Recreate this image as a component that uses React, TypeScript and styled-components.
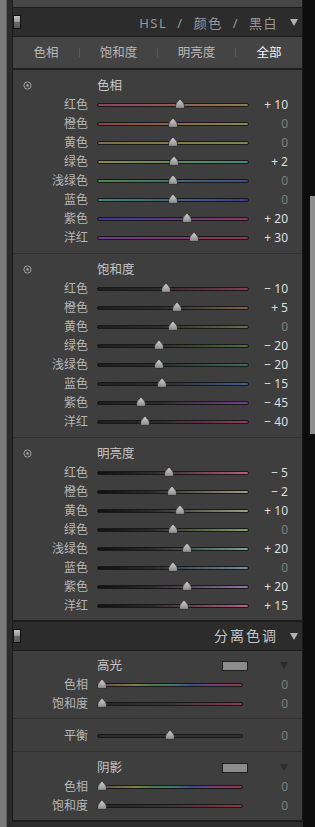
import * as React from 'react';
import styled, { createGlobalStyle, css } from 'styled-components';

const GlobalStyle = createGlobalStyle`
  html, body {
    margin: 0;
    padding: 0;
    background: #0c0c0c;
  }
  body {
    font-family: "Noto Sans", "Noto Sans CJK SC", sans-serif;
  }
`;

const sides = css`
  border-left: 1px solid #1b1b1b;
  border-right: 1px solid #1b1b1b;
`;

const Screen = styled.div`
  display: flex;
  width: 315px;
  height: 827px;
  overflow: hidden;
  background: #0c0c0c;
`;

const Edge = styled.div`
  width: 7px;
  background: #7a7a7a;
  box-shadow: inset -1px 0 0 #5e5e5e;
`;

const Column = styled.div`
  width: 296px;
  padding-left: 5px;
  box-sizing: border-box;
  background: #2b2b2b;
  display: flex;
  flex-direction: column;
`;

const ScrollTrack = styled.div`
  width: 12px;
  padding-left: 7px;
  box-sizing: border-box;
  background: #0c0c0c;
`;

const ScrollThumb = styled.div`
  margin-top: 196px;
  height: 238px;
  background: #8e8e8e;
`;

const TopStub = styled.div`
  ${sides};
  height: 7px;
  background: #464646;
  border-bottom: 1px solid #1b1b1b;
`;

const Header = styled.div`
  ${sides};
  height: 28px;
  background: #2c2c2c;
  border-bottom: 1px solid #1b1b1b;
  display: flex;
  align-items: center;
  padding-right: 4px;
`;

const Switch = styled.div`
  width: 8px;
  height: 14px;
  box-sizing: border-box;
  border: 1px solid #111;
  background: linear-gradient(#c4c4c4, #9c9c9c 45%, #6a6a6a 52%, #585858);
`;

const Spacer = styled.div`
  flex: 1;
`;

const FadedTitle = styled.div`
  align-self: flex-end;
  margin-bottom: 5px;
  display: flex;
  align-items: flex-end;
  gap: 10px;
  font-size: 13px;
  line-height: 16px;
  color: #9a9a9a;
  letter-spacing: 1.5px;
  white-space: nowrap;
`;

const HeaderTitle = styled.div`
  font-size: 14px;
  line-height: 18px;
  letter-spacing: 2px;
  color: #c6c6c6;
`;

const Caret = styled.div<{ $color?: string }>`
  width: 0;
  height: 0;
  margin-left: 12px;
  border-left: 4.5px solid transparent;
  border-right: 4.5px solid transparent;
  border-top: 7px solid ${p => p.$color || '#b2b2b2'};
`;

const TabBar = styled.div`
  ${sides};
  height: 31px;
  background: #444;
  border-bottom: 2px solid #1e1e1e;
  display: grid;
  grid-template-columns: 66px 1px 77px 1px 77px 1px 66px;
  align-items: center;
`;

const Tab = styled.div<{ $active?: boolean }>`
  text-align: center;
  font-size: 12.5px;
  line-height: 18px;
  color: ${p => (p.$active ? '#f2f2f2' : '#b8b8b8')};
`;

const TabDivider = styled.div`
  height: 9px;
  background: #5a5a5a;
`;

const Body = styled.div`
  ${sides};
  background: #3e3e3e;
  border-bottom: 2px solid #1c1c1c;
`;

const Section = styled.div<{ $top: number; $bottom: number; $last?: boolean }>`
  padding: ${p => p.$top}px 0 ${p => p.$bottom}px;
  border-bottom: ${p => (p.$last ? 'none' : '1px solid #323232')};
`;

const TitleRow = styled.div`
  display: flex;
  align-items: center;
  height: 19px;
  padding-right: 14px;
`;

const IconSlot = styled.div`
  width: 75px;
  padding-left: 10px;
  box-sizing: border-box;
  display: flex;
  align-items: center;
`;

const TitleText = styled.div`
  flex: 1;
  margin-left: 9px;
  font-size: 12.5px;
  line-height: 19px;
  color: #c6c6c6;
`;

const Swatch = styled.div`
  width: 26px;
  height: 10px;
  box-sizing: border-box;
  border: 1px solid #1e1e1e;
  background: #8c8c8c;
  margin-right: 20px;
`;

const Row = styled.div`
  display: flex;
  align-items: center;
  height: 19px;
  padding-right: 14px;
`;

const Label = styled.div`
  width: 75px;
  text-align: right;
  font-size: 12px;
  line-height: 19px;
  color: #b6b6b6;
  white-space: nowrap;
`;

const TrackArea = styled.div<{ $w: number }>`
  position: relative;
  width: ${p => p.$w}px;
  margin-left: 9px;
  height: 19px;
  display: flex;
  align-items: center;
`;

const Track = styled.div<{ $bg: string }>`
  width: 100%;
  height: 4px;
  box-sizing: border-box;
  border: 1px solid #181818;
  border-radius: 2px;
  background: ${p => p.$bg};
`;

const Knob = styled.svg`
  position: absolute;
  top: 3px;
  width: 10px;
  height: 11px;
`;

const Value = styled.div<{ $zero: boolean }>`
  flex: 1;
  text-align: right;
  font-size: 12px;
  line-height: 19px;
  color: ${p => (p.$zero ? '#7e7e7e' : '#dedede')};
  white-space: nowrap;
`;

const Filler = styled.div`
  flex: 1;
  background: #2c2c2c;
`;

const TargetIcon = () => (
  <svg width="9" height="9" viewBox="0 0 9 9">
    <circle cx="4.5" cy="4.5" r="3.6" fill="none" stroke="#9c9c9c" strokeWidth="1" />
    <circle cx="4.5" cy="4.5" r="1.3" fill="#a8a8a8" />
  </svg>
);

type SliderProps = {
  label: string;
  value: number;
  min: number;
  max: number;
  bg: string;
  width: number;
};

const Slider = ({ label, value, min, max, bg, width }: SliderProps) => {
  const frac = (value - min) / (max - min);
  const text = value > 0 ? `+ ${value}` : value < 0 ? `\u2212 ${Math.abs(value)}` : '0';
  return (
    <Row>
      <Label>{label}</Label>
      <TrackArea $w={width}>
        <Track $bg={bg} />
        <Knob viewBox="0 0 10 11" style={{ left: `calc((100% - 10px) * ${frac})` }}>
          <defs>
            <linearGradient id="knobFill" x1="0" y1="0" x2="0" y2="1">
              <stop offset="0" stopColor="#d6d6d6" />
              <stop offset="1" stopColor="#8a8a8a" />
            </linearGradient>
          </defs>
          <path
            d="M5 0.6 C5.8 2.6 9.4 5 9.4 7.4 L9.4 10.4 L0.6 10.4 L0.6 7.4 C0.6 5 4.2 2.6 5 0.6 Z"
            fill="url(#knobFill)"
            stroke="#262626"
            strokeWidth="0.8"
          />
        </Knob>
      </TrackArea>
      <Value $zero={value === 0}>{text}</Value>
    </Row>
  );
};

const two = (a: string, b: string) => `linear-gradient(90deg, ${a}, ${b})`;
const sat = (c: string) => `linear-gradient(90deg, #1e1e1e 0%, #2c2c2c 40%, ${c} 100%)`;
const lum = (c: string) => `linear-gradient(90deg, #101010 0%, #2a2a2a 35%, ${c} 100%)`;

const names = ['红色', '橙色', '黄色', '绿色', '浅绿色', '蓝色', '紫色', '洋红'];

const groups = [
  {
    title: '色相',
    values: [10, 0, 0, 2, 0, 0, 20, 30],
    tracks: [
      two('#8a4266', '#8e7c50'),
      two('#8e4040', '#8a8a4c'),
      two('#8c6a42', '#7c8a46'),
      two('#8a8c3e', '#3e8a7a'),
      two('#4a8a52', '#3e4a8c'),
      two('#3a8a72', '#403a8e'),
      two('#3c3a96', '#8a3a62'),
      two('#6a3a8e', '#8c3a4c'),
    ],
  },
  {
    title: '饱和度',
    values: [-10, 5, 0, -20, -20, -15, -45, -40],
    tracks: [
      sat('#843c52'),
      sat('#806446'),
      sat('#6e6e3e'),
      sat('#506e3c'),
      sat('#3c6e5e'),
      sat('#3c5e90'),
      sat('#7c3c8e'),
      sat('#8e3c5e'),
    ],
  },
  {
    title: '明亮度',
    values: [-5, -2, 10, 0, 20, 0, 20, 15],
    tracks: [
      lum('#b06474'),
      lum('#a49a80'),
      lum('#a2a272'),
      lum('#84a264'),
      lum('#74a294'),
      lum('#7090a6'),
      lum('#9474a6'),
      lum('#b0648a'),
    ],
  },
];

const splitHue =
  'linear-gradient(90deg, #6e4848 0%, #7a7048 18%, #7c7c44 26%, #4c7c4c 38%, #3e7a78 52%, #3e4a8a 66%, #7a3e7c 80%, #8c3a4a 100%)';
const splitSat = 'linear-gradient(90deg, #242424 0%, #343434 45%, #8a3a46 100%)';
const balance = 'linear-gradient(90deg, #2c2c2c, #303030)';

const App = () => (
  <>
    <GlobalStyle />
    <Screen>
      <Edge />
      <Column>
        <TopStub />
        <Header>
          <Switch />
          <Spacer />
          <FadedTitle>
            <span>HSL</span>
            <span>/</span>
            <span>颜色</span>
            <span>/</span>
            <span>黑白</span>
          </FadedTitle>
          <Caret />
        </Header>
        <TabBar>
          <Tab>色相</Tab>
          <TabDivider />
          <Tab>饱和度</Tab>
          <TabDivider />
          <Tab>明亮度</Tab>
          <TabDivider />
          <Tab $active>全部</Tab>
        </TabBar>
        <Body>
          {groups.map((g, gi) => (
            <Section key={g.title} $top={6} $bottom={gi === 2 ? 5 : 6} $last={gi === 2}>
              <TitleRow>
                <IconSlot>
                  <TargetIcon />
                </IconSlot>
                <TitleText>{g.title}</TitleText>
              </TitleRow>
              {names.map((n, i) => (
                <Slider key={n} label={n} value={g.values[i]} min={-100} max={100} bg={g.tracks[i]} width={152} />
              ))}
            </Section>
          ))}
        </Body>
        <Header>
          <Switch />
          <Spacer />
          <HeaderTitle>分离色调</HeaderTitle>
          <Caret />
        </Header>
        <Body>
          <Section $top={5} $bottom={5}>
            <TitleRow>
              <IconSlot />
              <TitleText>高光</TitleText>
              <Swatch />
              <Caret $color="#2c2c2c" />
            </TitleRow>
            <Slider label="色相" value={0} min={0} max={360} bg={splitHue} width={146} />
            <Slider label="饱和度" value={0} min={0} max={100} bg={splitSat} width={146} />
          </Section>
          <Section $top={7} $bottom={6}>
            <Slider label="平衡" value={0} min={-100} max={100} bg={balance} width={146} />
          </Section>
          <Section $top={6} $bottom={5} $last>
            <TitleRow>
              <IconSlot />
              <TitleText>阴影</TitleText>
              <Swatch />
              <Caret $color="#2c2c2c" />
            </TitleRow>
            <Slider label="色相" value={0} min={0} max={360} bg={splitHue} width={146} />
            <Slider label="饱和度" value={0} min={0} max={100} bg={splitSat} width={146} />
          </Section>
        </Body>
        <Filler />
      </Column>
      <ScrollTrack>
        <ScrollThumb />
      </ScrollTrack>
    </Screen>
  </>
);

export default App;
